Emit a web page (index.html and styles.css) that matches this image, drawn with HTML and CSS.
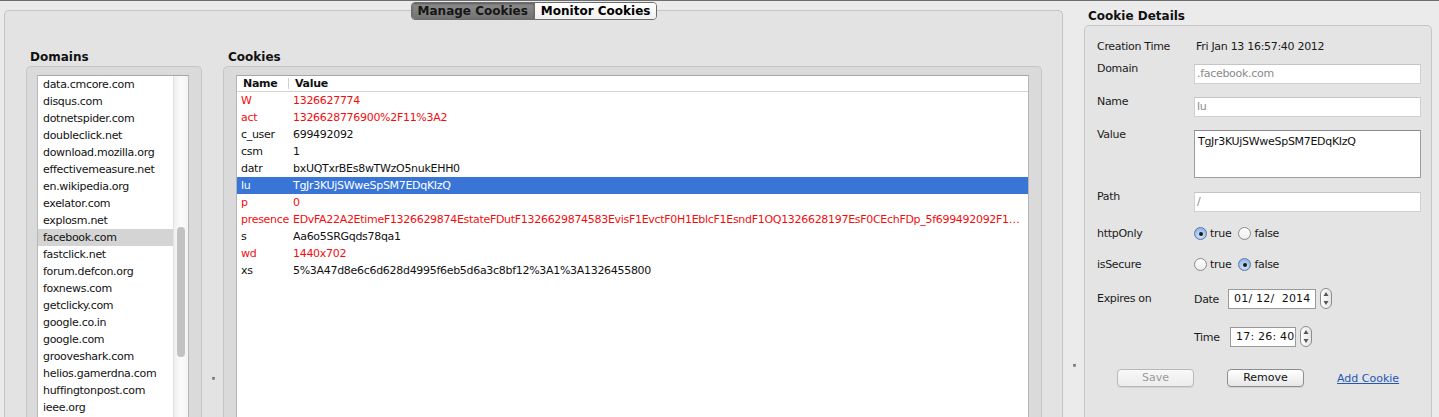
FILE: index.html
```html
<!DOCTYPE html>
<html>
<head>
<meta charset="utf-8">
<title>Cookie Manager</title>
<link rel="stylesheet" href="styles.css">
</head>
<body>
<div class="app">
  <section class="tabview">
    <div class="tabs">
      <div class="seg">
        <div class="seg-item active">Manage Cookies</div>
        <div class="seg-item">Monitor Cookies</div>
      </div>
    </div>
    <div class="panes">
      <div class="col-domains">
        <div class="heading pad4">Domains</div>
        <div class="group group-domains">
          <div class="dlist">
            <div class="dlist-items">
              <div class="drow">data.cmcore.com</div>
              <div class="drow">disqus.com</div>
              <div class="drow">dotnetspider.com</div>
              <div class="drow">doubleclick.net</div>
              <div class="drow">download.mozilla.org</div>
              <div class="drow">effectivemeasure.net</div>
              <div class="drow">en.wikipedia.org</div>
              <div class="drow">exelator.com</div>
              <div class="drow">explosm.net</div>
              <div class="drow selected">facebook.com</div>
              <div class="drow">fastclick.net</div>
              <div class="drow">forum.defcon.org</div>
              <div class="drow">foxnews.com</div>
              <div class="drow">getclicky.com</div>
              <div class="drow">google.co.in</div>
              <div class="drow">google.com</div>
              <div class="drow">grooveshark.com</div>
              <div class="drow">helios.gamerdna.com</div>
              <div class="drow">huffingtonpost.com</div>
              <div class="drow">ieee.org</div>
            </div>
            <div class="track"><div class="thumb"></div></div>
          </div>
        </div>
      </div>
      <div class="splitter split-left"><div class="grip"></div></div>
      <div class="col-cookies">
        <div class="heading pad5">Cookies</div>
        <div class="group group-cookies">
          <div class="ctable">
            <div class="chead">
              <div class="hname">Name</div>
              <div class="hval">Value</div>
            </div>
            <div class="crow red"><div class="cname">W</div><div class="cval">1326627774</div></div>
            <div class="crow red"><div class="cname">act</div><div class="cval">1326628776900%2F11%3A2</div></div>
            <div class="crow"><div class="cname">c_user</div><div class="cval">699492092</div></div>
            <div class="crow"><div class="cname">csm</div><div class="cval">1</div></div>
            <div class="crow"><div class="cname">datr</div><div class="cval">bxUQTxrBEs8wTWzO5nukEHH0</div></div>
            <div class="crow sel"><div class="cname">lu</div><div class="cval">TgJr3KUjSWweSpSM7EDqKIzQ</div></div>
            <div class="crow red"><div class="cname">p</div><div class="cval">0</div></div>
            <div class="crow red"><div class="cname">presence</div><div class="cval">EDvFA22A2EtimeF1326629874EstateFDutF1326629874583EvisF1EvctF0H1EblcF1EsndF1OQ1326628197EsF0CEchFDp_5f699492092F1CC</div></div>
            <div class="crow"><div class="cname">s</div><div class="cval">Aa6o5SRGqds78qa1</div></div>
            <div class="crow red"><div class="cname">wd</div><div class="cval">1440x702</div></div>
            <div class="crow"><div class="cname">xs</div><div class="cval">5%3A47d8e6c6d628d4995f6eb5d6a3c8bf12%3A1%3A1326455800</div></div>
          </div>
        </div>
      </div>
    </div>
  </section>
  <div class="splitter split-right"><div class="grip"></div></div>
  <section class="details">
    <div class="heading pad4">Cookie Details</div>
    <div class="dbox">
      <div class="frow r-created">
        <div class="flabel">Creation Time</div>
        <div class="fvalue">Fri Jan 13 16:57:40 2012</div>
      </div>
      <div class="frow r-domain">
        <div class="flabel">Domain</div>
        <div class="input muted">.facebook.com</div>
      </div>
      <div class="frow r-name">
        <div class="flabel">Name</div>
        <div class="input muted">lu</div>
      </div>
      <div class="frow r-value">
        <div class="flabel">Value</div>
        <div class="textarea">TgJr3KUjSWweSpSM7EDqKIzQ</div>
      </div>
      <div class="frow r-path">
        <div class="flabel">Path</div>
        <div class="input muted">/</div>
      </div>
      <div class="frow r-http">
        <div class="flabel">httpOnly</div>
        <div class="radios">
          <span class="radio"><span class="rdot on"></span>true</span>
          <span class="radio"><span class="rdot"></span>false</span>
        </div>
      </div>
      <div class="frow r-secure">
        <div class="flabel">isSecure</div>
        <div class="radios">
          <span class="radio"><span class="rdot"></span>true</span>
          <span class="radio"><span class="rdot on"></span>false</span>
        </div>
      </div>
      <div class="frow r-date">
        <div class="flabel">Expires on</div>
        <div class="sublabel date-l">Date</div>
        <div class="spin date-f">01/ 12/  2014</div>
        <svg class="stepper" width="12" height="21" viewBox="0 0 12 21">
          <defs><linearGradient id="sg1" x1="0" y1="0" x2="1" y2="0"><stop offset="0" stop-color="#ffffff"/><stop offset="1" stop-color="#e4e4e4"/></linearGradient></defs>
          <rect x="0.5" y="0.5" width="11" height="20" rx="5.5" fill="url(#sg1)" stroke="#8c8c8c"/>
          <path d="M6 4 L8.5 8 L3.5 8 Z" fill="#555"/>
          <path d="M6 17 L8.5 13 L3.5 13 Z" fill="#555"/>
        </svg>
      </div>
      <div class="frow r-time">
        <div class="flabel"></div>
        <div class="sublabel time-l">Time</div>
        <div class="spin time-f">17: 26: 40</div>
        <svg class="stepper" width="12" height="21" viewBox="0 0 12 21">
          <defs><linearGradient id="sg2" x1="0" y1="0" x2="1" y2="0"><stop offset="0" stop-color="#ffffff"/><stop offset="1" stop-color="#e4e4e4"/></linearGradient></defs>
          <rect x="0.5" y="0.5" width="11" height="20" rx="5.5" fill="url(#sg2)" stroke="#8c8c8c"/>
          <path d="M6 4 L8.5 8 L3.5 8 Z" fill="#555"/>
          <path d="M6 17 L8.5 13 L3.5 13 Z" fill="#555"/>
        </svg>
      </div>
      <div class="frow r-buttons">
        <div class="btn disabled">Save</div>
        <div class="btn">Remove</div>
        <a class="link" href="#">Add Cookie</a>
      </div>
    </div>
  </section>
</div>
</body>
</html>
```

FILE: styles.css
```css
* { box-sizing: border-box; }
html, body {
  margin: 0;
  padding: 0;
  height: 417px;
  overflow: hidden;
}
body {
  background: #ebebeb;
  font-family: "DejaVu Sans", "Liberation Sans", sans-serif;
  font-size: 11px;
  letter-spacing: -0.3px;
  color: #111;
}
.app {
  display: flex;
  height: 417px;
  border-top: 1px solid #6e6e6e;
}

/* ---------- tab view ---------- */
.tabview {
  flex: none;
  width: 1059px;
  margin: 9px 0 0 4px;
  border: 1px solid #c4c4c4;
  border-bottom: none;
  border-radius: 5px 5px 0 0;
  background: #e3e3e3;
  padding: 0 20px 0 21px;
}
.tabs {
  display: flex;
  justify-content: center;
  margin-top: -9px;
}
.seg {
  display: flex;
  height: 18px;
  border: 1px solid #6d6d6d;
  border-radius: 4px;
  overflow: hidden;
}
.seg-item {
  font-size: 12px;
  font-weight: bold;
  letter-spacing: 0;
  line-height: 16px;
  padding: 0 6px;
  color: #000;
  background: linear-gradient(#ffffff, #f0f0f0);
}
.seg-item + .seg-item { border-left: 1px solid #6d6d6d; }
.seg-item.active {
  color: #161616;
  background: linear-gradient(#8c8c8c, #737373);
  box-shadow: inset 0 1px 2px rgba(0, 0, 0, 0.35);
}

.panes {
  display: flex;
  margin-top: 29px;
}
.heading {
  font-size: 12px;
  font-weight: bold;
  letter-spacing: 0;
  line-height: 16px;
  margin-bottom: 1px;
  color: #111;
}
.pad4 { padding-left: 4px; }
.pad5 { padding-left: 5px; }

.group {
  border: 1px solid #c6c6c6;
  border-bottom: none;
  border-radius: 5px 5px 0 0;
  background: #dadada;
  height: 360px;
}
.col-domains { flex: none; width: 176px; }
.group-domains { padding: 8px 12px 0 10px; }
.dlist {
  display: flex;
  height: 352px;
  background: #fff;
  border-top: 1px solid #a6a6a6;
  border-left: 1px solid #b8b8b8;
  border-right: 1px solid #b8b8b8;
}
.dlist-items { flex: 1; min-width: 0; overflow: hidden; }
.drow {
  height: 17px;
  line-height: 17px;
  padding-left: 5px;
  white-space: nowrap;
  color: #111;
}
.drow.selected { background: #d4d4d4; }
.track {
  flex: none;
  width: 15px;
  border-left: 1px solid #e2e2e2;
  background: linear-gradient(to right, #efefef, #fbfbfb 50%, #f3f3f3);
  padding: 151px 0 0 3px;
}
.thumb {
  width: 8px;
  height: 130px;
  border-radius: 4px;
  background: #c2c2c2;
}

.splitter { flex: none; width: 21px; }
.grip {
  width: 3px;
  height: 3px;
  border-radius: 1px;
  background: #8e8e8e;
  border-top: 1px solid #6d6d6d;
}
.split-left .grip { margin: 328px 0 0 10px; }
.split-right .grip { margin: 363px 0 0 10px; }

.col-cookies { flex: none; width: 819px; }
.group-cookies { padding: 8px 12px 0 12px; }
.ctable {
  height: 352px;
  background: #fff;
  border-top: 1px solid #a6a6a6;
  border-left: 1px solid #b5b5b5;
  border-right: 1px solid #b5b5b5;
}
.chead {
  display: flex;
  height: 16px;
  line-height: 15px;
  border-bottom: 1px solid #d2d2d2;
  font-weight: bold;
  color: #111;
}
.hname {
  flex: none;
  width: 52px;
  padding-left: 6px;
  border-right: 1px solid #cfcfcf;
  margin: 2px 0;
  line-height: 11px;
}
.hval { padding-left: 6px; }
.crow {
  display: flex;
  height: 17px;
  line-height: 17px;
  white-space: nowrap;
  color: #111;
}
.cname {
  flex: none;
  width: 52px;
  padding-left: 4px;
}
.cval {
  flex: 1;
  min-width: 0;
  padding: 0 5px 0 4px;
  overflow: hidden;
  text-overflow: ellipsis;
}
.crow.red { color: #f20d0d; }
.crow.sel { background: #3875d7; color: #fff; }

/* ---------- details ---------- */
.details {
  flex: none;
  width: 348px;
  padding-top: 7px;
}
.dbox {
  height: 400px;
  border: 1px solid #c6c6c6;
  border-bottom: none;
  border-radius: 5px 5px 0 0;
  background: #e4e4e4;
  padding: 0 10px 0 12px;
}
.frow {
  display: flex;
  align-items: flex-start;
  line-height: 17px;
  color: #1a1a1a;
}
.flabel { flex: none; width: 97px; }
.fvalue { padding-left: 2px; }
.r-created { margin-top: 12px; }
.r-domain { margin-top: 5px; }
.r-name { margin-top: 9px; }
.r-value { margin-top: 9px; }
.r-path { margin-top: 10px; }
.r-http { margin-top: 13px; }
.r-secure { margin-top: 14px; }
.r-date { margin-top: 15px; align-items: center; height: 21px; }
.r-time { margin-top: 17px; align-items: center; height: 21px; }
.r-buttons { margin-top: 22px; align-items: center; }

.input {
  margin-top: 4px;
  width: 227px;
  height: 20px;
  line-height: 18px;
  background: #fff;
  border: 1px solid #d0d0d0;
  border-top-color: #c4c4c4;
  padding-left: 2px;
}
.input.muted { color: #8a8a8a; }
.textarea {
  margin-top: 4px;
  width: 227px;
  height: 48px;
  background: #fff;
  border: 1px solid #9c9c9c;
  border-top-color: #8a8a8a;
  padding: 2px 0 0 3px;
  color: #111;
}

.radios { display: flex; align-items: center; }
.radio { display: inline-flex; align-items: center; }
.radio + .radio { margin-left: 7px; }
.rdot {
  width: 13px;
  height: 13px;
  border-radius: 50%;
  margin-right: 3px;
  border: 1px solid #8a8a8a;
  background: linear-gradient(#ffffff, #ececec);
  display: flex;
  align-items: center;
  justify-content: center;
}
.rdot.on {
  border-color: #5877a8;
  background: radial-gradient(circle at 50% 70%, #d6e6fb, #97b9e8 70%);
}
.rdot.on::after {
  content: "";
  width: 4px;
  height: 4px;
  border-radius: 50%;
  background: #1a1a1a;
}

.sublabel { flex: none; padding-top: 1px; }
.date-l { width: 34px; }
.time-l { width: 36px; }
.spin {
  height: 20px;
  line-height: 18px;
  background: #fff;
  border: 1px solid #9a9a9a;
  letter-spacing: 0.2px;
  white-space: pre;
  color: #111;
  padding-left: 5px;
}
.date-f { width: 88px; }
.time-f { width: 66px; }
.stepper { flex: none; margin-left: 4px; display: block; }

.btn {
  width: 77px;
  height: 18px;
  line-height: 16px;
  text-align: center;
  border: 1px solid #8e8e8e;
  border-radius: 4px;
  background: linear-gradient(#ffffff, #f3f3f3 50%, #e6e6e6);
  box-shadow: 0 1px 0 rgba(0, 0, 0, 0.08);
  letter-spacing: 0;
  color: #111;
  margin-left: 33px;
}
.btn.disabled {
  margin-left: 20px;
  color: #9a9a9a;
  border-color: #b8b8b8;
  background: linear-gradient(#f8f8f8, #ececec);
}
.link {
  margin-left: 33px;
  color: #2456b5;
  text-decoration: underline;
  letter-spacing: 0;
}
```
